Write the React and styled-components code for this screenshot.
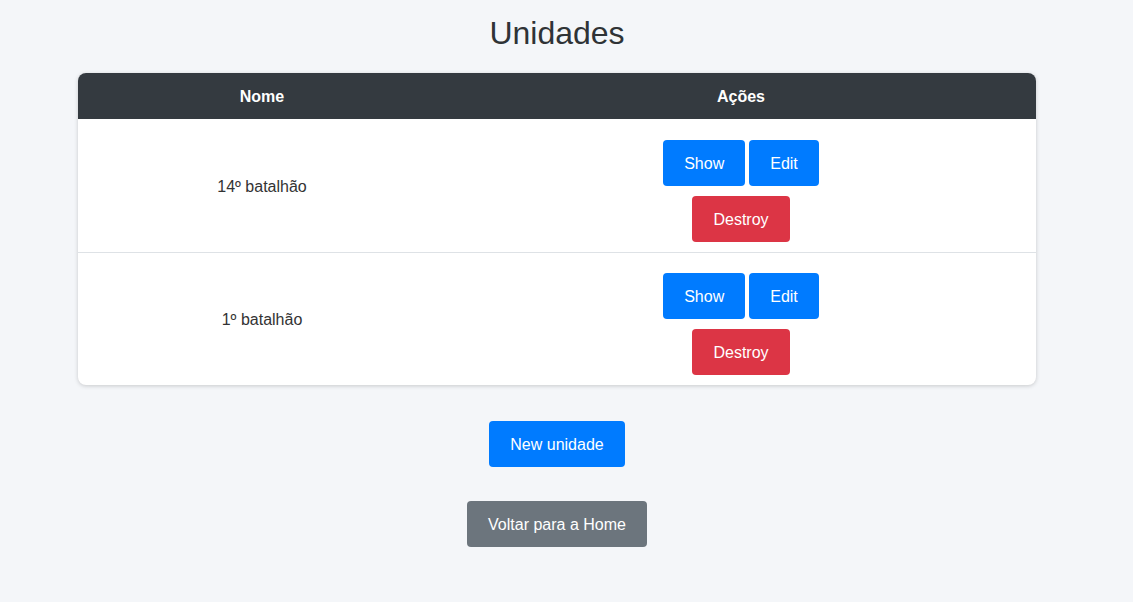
import React from "react";
import styled, { createGlobalStyle } from "styled-components";

const Global = createGlobalStyle`
  html, body { margin: 0; padding: 0; background: #f4f6f9; }
  body { font-family: "Liberation Sans", Arial, sans-serif; color: #333; }
`;

const Page = styled.div`
  width: 1114px;
  padding-top: 14px;
  display: flex;
  flex-direction: column;
  align-items: center;
`;

const Title = styled.h1`
  margin: 0 0 21px;
  font-size: 32px;
  line-height: 38px;
  font-weight: 400;
  color: #2f3336;
`;

const Table = styled.div`
  width: 958px;
  background: #fff;
  border-radius: 8px;
  overflow: hidden;
  box-shadow: 0 1px 4px rgba(0, 0, 0, 0.18);
`;

const HeadRow = styled.div`
  display: grid;
  grid-template-columns: 368px 1fr;
  height: 46px;
  background: #343a40;
  color: #fff;
  font-weight: 700;
  font-size: 16px;
`;

const HeadCell = styled.div`
  display: flex;
  align-items: center;
  justify-content: center;
  padding-top: 2px;
`;

const Row = styled.div`
  display: grid;
  grid-template-columns: 368px 1fr;
  height: 132px;
  border-top: 1px solid ${(p) => (p.$first ? "#fff" : "#dee2e6")};
`;

const NameCell = styled.div`
  display: flex;
  align-items: center;
  justify-content: center;
  padding-top: 2px;
  font-size: 16px;
  color: #333;
`;

const ActionsCell = styled.div`
  display: flex;
  flex-direction: column;
  align-items: center;
  padding-top: 20px;
  gap: 10px;
`;

const ButtonLine = styled.div`
  display: flex;
  gap: 4px;
`;

const colors = {
  primary: "#007bff",
  danger: "#dc3545",
  secondary: "#6c757d",
};

const Button = styled.button`
  height: 46px;
  padding: 2px 21px 0;
  border: none;
  border-radius: 4px;
  background: ${(p) => colors[p.$variant || "primary"]};
  color: #fff;
  font-family: "Liberation Sans", Arial, sans-serif;
  font-size: 16px;
  cursor: pointer;
`;

const Bottom = styled.div`
  display: flex;
  flex-direction: column;
  align-items: center;
  gap: 34px;
  margin-top: 36px;
`;

const data = ["14º batalhão", "1º batalhão"];

export default function App() {
  return (
    <>
      <Global />
      <Page>
        <Title>Unidades</Title>
        <Table>
          <HeadRow>
            <HeadCell>Nome</HeadCell>
            <HeadCell>Ações</HeadCell>
          </HeadRow>
          {data.map((name, i) => (
            <Row key={name} $first={i === 0}>
              <NameCell>{name}</NameCell>
              <ActionsCell>
                <ButtonLine>
                  <Button>Show</Button>
                  <Button>Edit</Button>
                </ButtonLine>
                <Button $variant="danger">Destroy</Button>
              </ActionsCell>
            </Row>
          ))}
        </Table>
        <Bottom>
          <Button>New unidade</Button>
          <Button $variant="secondary">Voltar para a Home</Button>
        </Bottom>
      </Page>
    </>
  );
}
